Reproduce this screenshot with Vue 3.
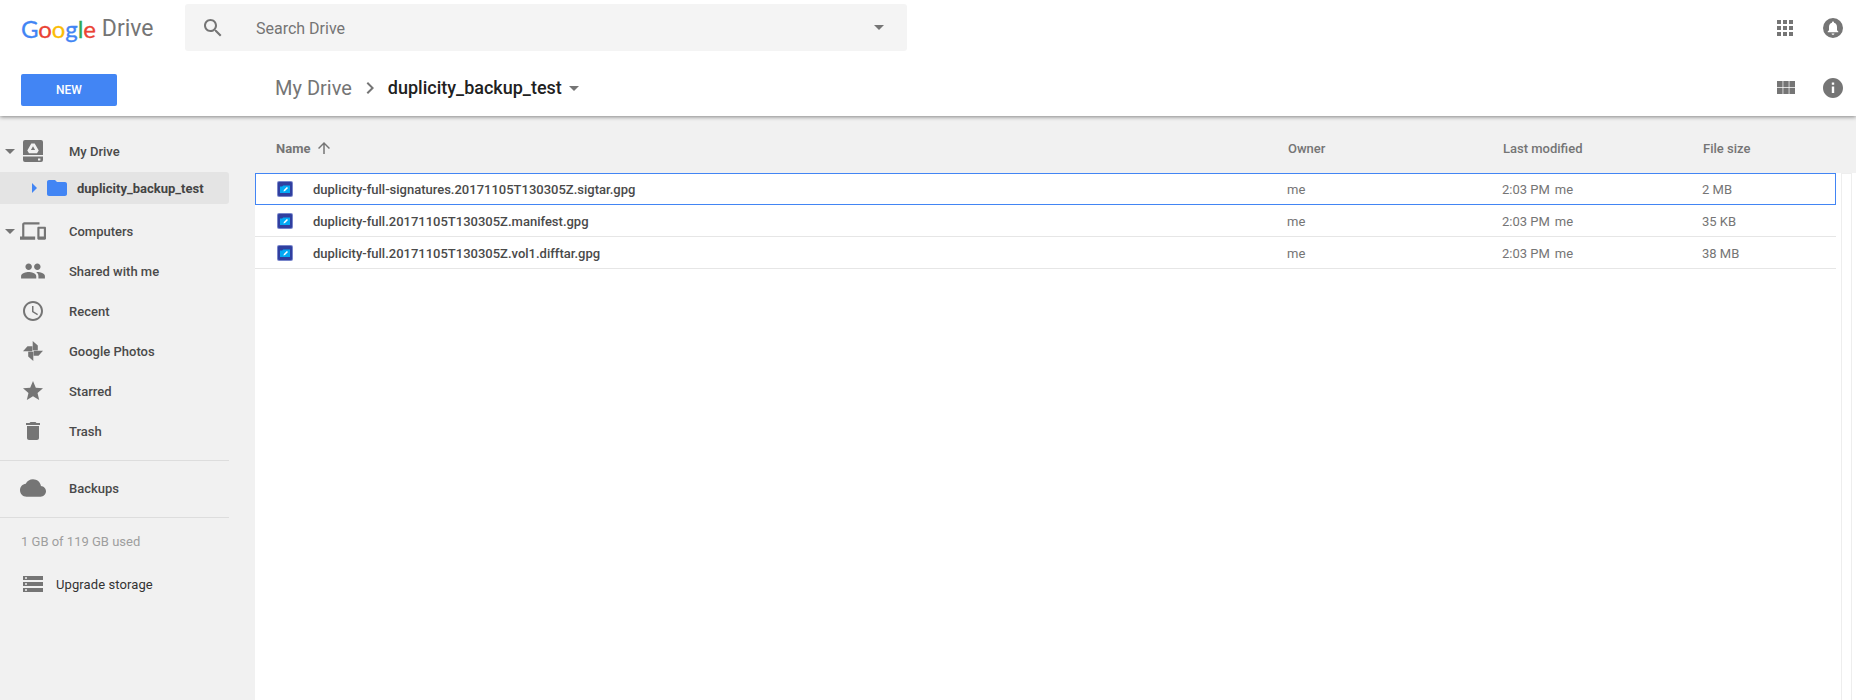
<script setup>
const icons = {
  search: 'M15.5 14h-.79l-.28-.27C15.41 12.59 16 11.11 16 9.5 16 5.91 13.09 3 9.5 3S3 5.91 3 9.5 5.91 16 9.5 16c1.61 0 3.09-.59 4.23-1.57l.27.28v.79l5 4.99L20.49 19l-4.99-5zm-6 0C7.01 14 5 11.99 5 9.5S7.01 5 9.5 5 14 7.01 14 9.5 11.99 14 9.5 14z',
  people: 'M16 11c1.66 0 2.99-1.34 2.99-3S17.66 5 16 5c-1.66 0-3 1.34-3 3s1.34 3 3 3zm-8 0c1.66 0 2.99-1.34 2.99-3S9.66 5 8 5C6.34 5 5 6.34 5 8s1.34 3 3 3zm0 2c-2.33 0-7 1.17-7 3.5V19h14v-2.5c0-2.33-4.67-3.5-7-3.5zm8 0c-.29 0-.62.02-.97.05 1.16.84 1.97 1.97 1.97 3.45V19h6v-2.5c0-2.33-4.67-3.5-7-3.5z',
  clock: 'M11.99 2C6.47 2 2 6.48 2 12s4.47 10 9.99 10C17.52 22 22 17.52 22 12S17.52 2 11.99 2zM12 20c-4.42 0-8-3.58-8-8s3.58-8 8-8 8 3.58 8 8-3.58 8-8 8zm.5-13H11v6l5.25 3.15.75-1.23-4.5-2.67z',
  photos: 'M11.7 2L16.8 6.500V11.300H11.700ZM22 11.700L17.500 16.800H12.700V11.700ZM12.300 22L7.200 17.500V12.700H12.300ZM2 12.300L6.500 7.200H11.300V12.300Z',
  star: 'M12 17.27L18.18 21l-1.64-7.03L22 9.24l-7.19-.61L12 2 9.19 8.63 2 9.24l5.46 4.73L5.82 21z',
  trash: 'M6 19c0 1.1.9 2 2 2h8c1.1 0 2-.9 2-2V7H6v12zM19 4h-3.5l-1-1h-5l-1 1H5v2h14V4z',
  cloud: 'M19.35 10.04C18.67 6.59 15.64 4 12 4 9.11 4 6.6 5.64 5.35 8.04 2.34 8.36 0 10.91 0 14c0 3.31 2.69 6 6 6h13c2.76 0 5-2.24 5-5 0-2.64-2.05-4.78-4.65-4.96z',
  devices: 'M4 6h14V4H4c-1.1 0-2 .9-2 2v11H0v3h14v-3H4V6zm19 2h-6c-.55 0-1 .45-1 1v10c0 .55.45 1 1 1h6c.55 0 1-.45 1-1V9c0-.55-.45-1-1-1zm-1 9h-4v-7h4v7z',
  folder: 'M10 4H4c-1.1 0-1.99.9-1.99 2L2 18c0 1.1.9 2 2 2h16c1.1 0 2-.9 2-2V8c0-1.1-.9-2-2-2h-8l-2-2z',
  storage: 'M2 4h20v4H2zM2 10h20v4H2zM2 16h20v4H2zM4 5.2v1.6h2V5.2zM4 11.2v1.6h2v-1.6zM4 17.2v1.6h2v-1.6z',
  apps: 'M4 4h4v4H4zM10 4h4v4h-4zM16 4h4v4h-4zM4 10h4v4H4zM10 10h4v4h-4zM16 10h4v4h-4zM4 16h4v4H4zM10 16h4v4h-4zM16 16h4v4h-4z',
  grid: 'M3 5h5.6v6H3zM9.3 5h5.4v6H9.3zM15.4 5H21v6h-5.6zM3 11.7h5.6V18H3zM9.3 11.7h5.4V18H9.3zM15.4 11.7H21V18h-5.6z',
  bell: 'M12 2a10 10 0 1 0 0 20 10 10 0 0 0 0-20zm0 3.4c.6 0 1 .4 1 1v.4c1.9.5 3 2.1 3 4.2v3.3l1.3 1.3v.7H6.7v-.7L8 14.3V11c0-2.1 1.100-3.700 3-4.200v-.4c0-.6.4-1 1-1zm-1.400 12h2.800c0 .8-.6 1.400-1.400 1.400s-1.400-.6-1.400-1.400z',
  info: 'M12 2C6.48 2 2 6.48 2 12s4.480 10 10 10 10-4.480 10-10S17.520 2 12 2zm1.200 15h-2.400v-6.400h2.400zm0-8.200h-2.400V6.500h2.400z',
  up: 'M4 12l1.41 1.41L11 7.83V20h2V7.83l5.58 5.59L20 12l-8-8-8 8z',
  chevron: 'M10 6L8.590 7.410 13.170 12l-4.580 4.590L10 18l6-6z',
}
const logo = [
  ['G', '#4285f4'], ['o', '#ea4335'], ['o', '#fbbc05'], ['g', '#4285f4'], ['l', '#34a853'], ['e', '#ea4335'],
]
const nav = [
  { label: 'Shared with me', icon: 'people', size: 26 },
  { label: 'Recent', icon: 'clock', size: 24 },
  { label: 'Google Photos', icon: 'photos', size: 24 },
  { label: 'Starred', icon: 'star', size: 24 },
  { label: 'Trash', icon: 'trash', size: 24 },
]
const files = [
  { name: 'duplicity-full-signatures.20171105T130305Z.sigtar.gpg', size: '2 MB', selected: true },
  { name: 'duplicity-full.20171105T130305Z.manifest.gpg', size: '35 KB' },
  { name: 'duplicity-full.20171105T130305Z.vol1.difftar.gpg', size: '38 MB' },
]
</script>

<template>
  <div class="app">
    <header class="header">
      <div class="top">
        <div class="logo">
          <span class="google"><span v-for="(l, i) in logo" :key="i" :style="{ color: l[1] }">{{ l[0] }}</span></span>
          <span class="drive">Drive</span>
        </div>
        <div class="search">
          <svg class="search-icon" viewBox="0 0 24 24"><path :d="icons.search" /></svg>
          <span class="search-text">Search Drive</span>
          <span class="caret search-caret"></span>
        </div>
        <div class="actions">
          <svg class="act-apps" viewBox="0 0 24 24"><path :d="icons.apps" /></svg>
          <svg class="act-round" viewBox="0 0 24 24"><path fill-rule="evenodd" :d="icons.bell" /></svg>
        </div>
      </div>
      <div class="bottom">
        <button class="new">NEW</button>
        <div class="crumbs">
          <span class="crumb-root">My Drive</span>
          <svg class="crumb-chevron" viewBox="0 0 24 24"><path :d="icons.chevron" /></svg>
          <span class="crumb-current">duplicity_backup_test</span>
          <span class="caret crumb-caret"></span>
        </div>
        <div class="actions">
          <svg class="act-apps" viewBox="0 0 24 24"><path :d="icons.grid" /></svg>
          <svg class="act-round" viewBox="0 0 24 24"><path fill-rule="evenodd" :d="icons.info" /></svg>
        </div>
      </div>
    </header>

    <div class="body">
      <aside class="sidebar">
        <div class="item">
          <span class="caret side-caret"></span>
          <svg class="ic" viewBox="0 0 24 24">
            <path d="M4 1h16a2 2 0 0 1 2 2v13H2V3a2 2 0 0 1 2-2zM2 17.500h20V21a2 2 0 0 1-2 2H4a2 2 0 0 1-2-2z" />
            <path fill="#f1f1f1" d="M10.300 4.500h3.400l4 7-1.700 2.800H8l-1.700-2.800zM12 7.300l-2.100 3.700h4.200z" fill-rule="evenodd" />
            <rect x="17" y="19.500" width="2.400" height="2" fill="#f1f1f1" />
          </svg>
          <span class="label">My Drive</span>
        </div>
        <div class="tree-selected">
          <span class="blue-caret"></span>
          <svg class="tree-folder" viewBox="0 0 24 24"><path :d="icons.folder" /></svg>
          <span class="tree-label">duplicity_backup_test</span>
        </div>
        <div class="item">
          <span class="caret side-caret"></span>
          <svg class="ic wide" viewBox="0 0 24 24"><path :d="icons.devices" /></svg>
          <span class="label">Computers</span>
        </div>
        <div v-for="n in nav" :key="n.label" class="item">
          <svg class="ic" :style="{ width: n.size + 'px', height: n.size + 'px' }" viewBox="0 0 24 24"><path :d="icons[n.icon]" /></svg>
          <span class="label">{{ n.label }}</span>
        </div>
        <div class="divider"></div>
        <div class="item">
          <svg class="ic wide" viewBox="0 0 24 24"><path :d="icons.cloud" /></svg>
          <span class="label">Backups</span>
        </div>
        <div class="divider"></div>
        <div class="quota">1 GB of 119 GB used</div>
        <div class="upgrade">
          <svg class="ic" viewBox="0 0 24 24"><path fill-rule="evenodd" :d="icons.storage" /></svg>
          <span class="upgrade-label">Upgrade storage</span>
        </div>
      </aside>

      <main class="main">
        <div class="cols cols-head">
          <div class="head-name">Name <svg class="up" viewBox="0 0 24 24"><path :d="icons.up" /></svg></div>
          <div>Owner</div>
          <div>Last modified</div>
          <div>File size</div>
        </div>
        <div class="content">
          <div class="list">
            <div v-for="f in files" :key="f.name" class="cols row" :class="{ selected: f.selected }">
              <div class="name-cell">
                <svg class="file-icon" viewBox="0 0 16 16">
                  <rect x="0" y="0" width="16" height="16" rx="2" fill="#7986cb" />
                  <rect x="1" y="1" width="14" height="14" rx="1" fill="#303f9f" />
                  <path d="M3 5.500h2.200l1-1H13v7.500H3z" fill="#03a9f4" />
                  <path d="M6.500 10.500l.4-1.500 3-3 1.100 1.100-3 3z" fill="#fff" />
                </svg>
                <span class="file-name">{{ f.name }}</span>
              </div>
              <div class="cell">me</div>
              <div class="cell"><span class="time">2:03 PM</span>me</div>
              <div class="cell">{{ f.size }}</div>
            </div>
          </div>
          <div class="track"></div>
        </div>
      </main>
    </div>
  </div>
</template>

<style>
html, body { margin: 0; overflow: hidden; background: #fff; }
</style>

<style scoped>
.app { width: 1856px; height: 700px; display: flex; flex-direction: column; font-family: Roboto, "Liberation Sans", sans-serif; color: #444; overflow: hidden; }
svg { display: block; fill: #757575; flex: none; }

.header { height: 116px; background: #fff; position: relative; z-index: 2; box-shadow: 0 1px 4px rgba(0,0,0,.45); }
.top { height: 58px; display: flex; align-items: flex-start; }
.logo { width: 185px; height: 56px; box-sizing: border-box; padding-left: 21px; display: flex; align-items: center; gap: 6px; }
.google { font-family: Lato, sans-serif; font-size: 24px; letter-spacing: -.1px; -webkit-text-stroke: .3px currentColor; }
.drive { font-size: 23px; color: #757575; }
.search { width: 722px; height: 47px; margin-top: 4px; background: #f4f4f4; border-radius: 3px; display: flex; align-items: center; padding: 0 23px 0 16px; box-sizing: border-box; }
.search-icon { width: 24px; height: 24px; }
.search-text { flex: 1; margin-left: 31px; font-size: 16px; color: #757575; padding-top: 1px; }
.caret { display: block; width: 0; height: 0; border-left: 5px solid transparent; border-right: 5px solid transparent; border-top: 5px solid #757575; }
.actions { margin-left: auto; display: flex; align-items: center; padding-right: 11px; gap: 23px; }
.top .actions { margin-top: 16px; gap: 24px; }
.act-apps { width: 24px; height: 24px; }
.act-round { width: 24px; height: 24px; }

.bottom { height: 58px; display: flex; align-items: center; }
.new { width: 96px; height: 32px; margin: 5px 0 0 21px; background: #4285f4; border: 0; border-radius: 2px; color: #fff; font: 500 12px Roboto, sans-serif; padding: 0; }
.crumbs { margin: 1px 0 0 158px; display: flex; align-items: center; }
.crumb-root { font-size: 20px; color: #757575; }
.crumb-chevron { width: 24px; height: 24px; margin: 0 6px 0 6px; }
.crumb-current { font-size: 18px; font-weight: 500; color: #212121; }
.crumb-caret { margin: 2px 0 0 7px; }
.bottom .actions { margin-top: 1px; }

.body { flex: 1; display: flex; min-height: 0; }
.sidebar { width: 255px; flex: none; background: #f1f1f1; padding-top: 15px; box-sizing: border-box; }
.item { height: 40px; display: grid; grid-template-columns: 19px 28px 22px 1fr; align-items: center; }
.item .ic { grid-column: 2; justify-self: center; }
.item .side-caret { grid-column: 1; margin-left: 5px; }
.ic { width: 24px; height: 24px; }
.ic.wide { width: 26px; height: 26px; }
.label { grid-column: 4; font-size: 13px; font-weight: 500; color: #4a4a4a; }
.tree-selected { width: 229px; height: 32px; margin: 1px 0 7px; background: #e4e4e4; border-radius: 0 3px 3px 0; display: flex; align-items: center; box-sizing: border-box; padding-left: 32px; }
.blue-caret { width: 0; height: 0; border-top: 5px solid transparent; border-bottom: 5px solid transparent; border-left: 5px solid #4285f4; }
.tree-folder { width: 24px; height: 24px; fill: #4285f4; margin-left: 8px; }
.tree-label { font-size: 13px; font-weight: 700; color: #444; margin-left: 8px; }
.divider { width: 229px; height: 1px; background: #ddd; margin: 9px 0 7px; }
.quota { height: 32px; line-height: 34px; padding-left: 21px; font-size: 13px; color: #9e9e9e; }
.upgrade { height: 40px; margin-top: 7px; display: flex; align-items: center; padding-left: 21px; }
.upgrade-label { margin-left: 11px; font-size: 13px; font-weight: 400; letter-spacing: .1px; color: #333; }

.main { flex: 1; min-width: 0; display: flex; flex-direction: column; }
.cols { display: grid; grid-template-columns: 1033px 215px 200px 1fr; align-items: center; }
.cols-head { height: 57px; box-sizing: border-box; padding-top: 7px; background: #f1f1f1; width: 100%; font-size: 13px; font-weight: 500; color: #757575; }
.head-name { padding-left: 21px; display: flex; align-items: center; gap: 5px; font-weight: 700; }
.up { width: 18px; height: 18px; }
.content { flex: 1; display: flex; min-height: 0; }
.list { width: 1581px; flex: none; }
.row { height: 32px; box-sizing: border-box; box-shadow: inset 0 -1px 0 #e6e6e6; font-size: 13px; color: #757575; }
.row.selected { box-shadow: inset 0 0 0 1px #4285f4; }
.name-cell { display: flex; align-items: center; padding-left: 22px; }
.file-icon { width: 16px; height: 16px; }
.file-name { margin-left: 20px; font-weight: 500; color: #4a4a4a; white-space: nowrap; }
.cell { margin-left: -1px; }
.time { margin-right: 5px; }
.track { width: 11px; margin-left: 5px; border: 1px solid #eee; border-bottom: 0; box-sizing: border-box; }
</style>
